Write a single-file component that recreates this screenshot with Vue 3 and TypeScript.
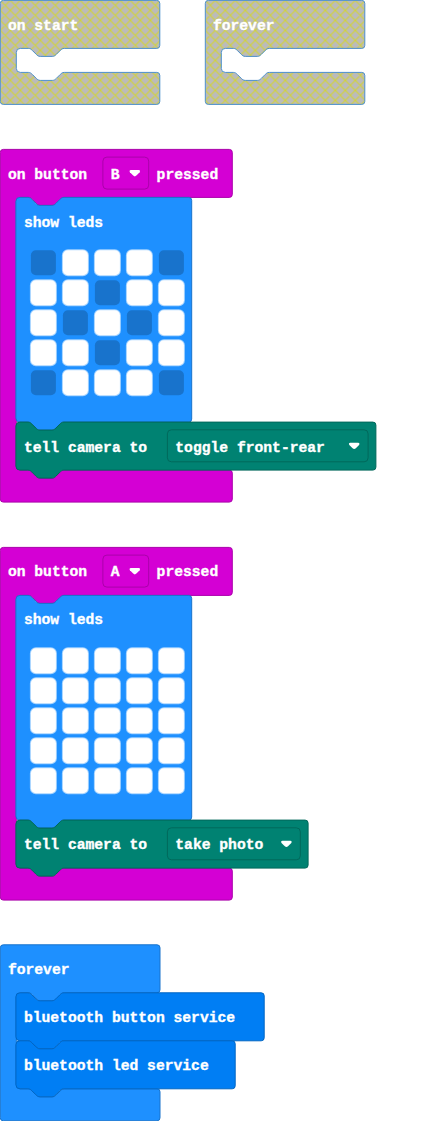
<script setup lang="ts">
type Label = { text: string; x: number; y: number }
type Field = { text: string; x: number; y: number; width: number }
type Block = {
  kind: string
  x: number
  y: number
  path: string
  labels: Label[]
  fields: Field[]
  leds?: string[]
}
type Stack = { id: string; width: number; height: number; dy: number; textDy: number; blocks: Block[] }

const CHAR = 8.8
const NOTCH = 'c2,0 3,1 4,2 l4,4 c1,1 2,2 4,2 h12 c2,0 3,-1 4,-2 l4,-4 c1,-1 2,-2 4,-2'
const NOTCH_BACK = 'c-2,0 -3,1 -4,2 l-4,4 c-1,1 -2,2 -4,2 h-12 c-2,0 -3,-1 -4,-2 l-4,-4 c-1,-1 -2,-2 -4,-2'

// C-shaped container: a 48px header, a cavity for nested statements and a 32px foot.
function hatPath(w: number, cavity: number): string {
  return (
    `M0,3 a3,3 0 0 1 3,-3 H${w - 3} a3,3 0 0 1 3,3 V45 a3,3 0 0 1 -3,3 H64 ${NOTCH_BACK} H20 ` +
    `a4,4 0 0 0 -4,4 v${cavity - 8} a4,4 0 0 0 4,4 h8 ${NOTCH} H${w - 3} a3,3 0 0 1 3,3 v26 a3,3 0 0 1 -3,3 H3 a3,3 0 0 1 -3,-3 z`
  )
}

function statementPath(w: number, h: number): string {
  return (
    `M0,4 a4,4 0 0 1 4,-4 h8 ${NOTCH} H${w - 3} a3,3 0 0 1 3,3 V${h - 3} a3,3 0 0 1 -3,3 ` +
    `H48 ${NOTCH_BACK} H4 a4,4 0 0 1 -4,-4 z`
  )
}

function hat(kind: string, w: number, cavity: number, text: string): Block {
  return { kind, x: 0, y: 0, path: hatPath(w, cavity), labels: [{ text, x: 7.6, y: 29.3 }], fields: [] }
}

function statement(kind: string, y: number, w: number, h: number, text: string): Block {
  return { kind, x: 15.6, y, path: statementPath(w, h), labels: [{ text, x: 8, y: 29.3 }], fields: [] }
}

function buttonStack(
  id: string,
  button: string,
  leds: string[],
  command: string,
  commandWidth: number,
  textDy: number,
): Stack {
  const event = hat('input', 232, 272.7, 'on button')
  event.fields.push({ text: button, x: 102.6, y: 7.7, width: 45.8 })
  event.labels.push({ text: 'pressed', x: 156.3, y: 29.3 })
  const show = statement('basic', 48, 175.8, 224.7, 'show leds')
  show.leds = leds
  const tell = statement('devices', 272.7, commandWidth, 48, 'tell camera to')
  tell.fields.push({ text: command, x: 151.5, y: 7.7, width: commandWidth - 159.3 })
  return { id, width: 380, height: 352.7, dy: 0, textDy, blocks: [event, show, tell] }
}

const unused: Stack[] = [
  { id: 'start', width: 160, height: 104, dy: 0, textDy: 0, blocks: [hat('disabled', 159.5, 24, 'on start')] },
  { id: 'idle', width: 160, height: 104, dy: 0, textDy: 0, blocks: [hat('disabled', 159.5, 24, 'forever')] },
]

const stacks: Stack[] = [
  buttonStack('button-b', 'B', ['.###.', '##.##', '#.#.#', '##.##', '.###.'], 'toggle front-rear', 360, 0.2),
  buttonStack('button-a', 'A', ['#####', '#####', '#####', '#####', '#####'], 'take photo', 292.2, -0.5),
  {
    id: 'loop',
    width: 270,
    height: 176,
    dy: 0.4,
    textDy: -0.4,
    blocks: [
      hat('basic', 159.7, 96, 'forever'),
      statement('bluetooth', 48, 248.3, 48, 'bluetooth button service'),
      statement('bluetooth', 96, 219.3, 48, 'bluetooth led service'),
    ],
  },
]
const rows: Stack[][] = [unused, ...stacks.map((s) => [s])]
</script>

<template>
  <main class="workspace">
    <div v-for="(row, r) in rows" :key="r" class="row">
      <svg v-for="stack in row" :key="stack.id" class="stack" :width="stack.width" :height="stack.height">
        <defs>
          <pattern :id="`hatch-${stack.id}`" patternUnits="userSpaceOnUse" width="10" height="10">
            <rect class="hatch-ground" width="10" height="10" />
            <path class="hatch-lines" d="M-1,-1 L11,11 M11,-1 L-1,11 M-1,9 L1,11 M9,-1 L11,1 M-1,1 L1,-1 M9,11 L11,9" />
          </pattern>
        </defs>
        <g
          v-for="(b, i) in stack.blocks"
          :key="i"
          :class="b.kind"
          :transform="`translate(${b.x + 0.3},${b.y + 0.4 + stack.dy})`"
        >
          <path class="shape" :d="b.path" :fill="b.kind === 'disabled' ? `url(#hatch-${stack.id})` : undefined" />
          <text
            v-for="l in b.labels"
            :key="l.text"
            :x="l.x"
            :y="l.y + stack.textDy"
            :textLength="l.text.length * CHAR"
          >{{ l.text }}</text>
          <g v-for="f in b.fields" :key="f.text" :transform="`translate(${f.x},${f.y})`">
            <rect class="field" :width="f.width" height="32" rx="4" />
            <text x="7.9" :y="21.8 + stack.textDy" :textLength="f.text.length * CHAR">{{ f.text }}</text>
            <path
              class="arrow"
              :transform="`translate(${f.width - 19.3},12.9)`"
              d="M1.5,0 H9.3 Q11.4,.3 10.3,2.2 L7,5.6 Q5.4,7.2 3.8,5.6 L.5,2.2 Q-.6,.3 1.5,0 z"
            />
          </g>
          <template v-for="(line, y) in b.leds ?? []" :key="y">
            <rect
              v-for="(c, x) in line.split('')"
              :key="x"
              :class="c === '#' ? 'led on' : 'led'"
              :x="15 + x * 32"
              :y="52.8 + y * 30"
              width="25"
              height="25"
              rx="5"
            />
          </template>
        </g>
      </svg>
    </div>
  </main>
</template>

<style>
body {
  margin: 0;
  background: #fff;
}
</style>

<style scoped>
.workspace {
  display: flex;
  flex-direction: column;
  gap: 45px;
  width: 428px;
  height: 1121px;
  overflow: hidden;
}
.row {
  display: flex;
  gap: 45px;
}
.stack {
  display: block;
  flex: none;
  overflow: visible;
}
.shape {
  stroke-width: 1;
}
.hatch-ground {
  fill: #bbb;
}
.hatch-lines {
  stroke: #d4d433;
  stroke-width: 1.1;
}
.disabled .shape {
  stroke: #4b8fcc;
}
.input .shape {
  fill: #d400d4;
  stroke: #aa00aa;
}
.basic .shape {
  fill: #1e90ff;
  stroke: #1873cc;
}
.devices .shape {
  fill: #008272;
  stroke: #00685b;
}
.bluetooth .shape {
  fill: #007ef4;
  stroke: #0065c3;
}
.field {
  fill: none;
  stroke: #aa00aa;
}
.devices .field {
  stroke: #00685b;
}
.arrow {
  fill: #fff;
}
.led {
  fill: #1873cc;
}
.led.on {
  fill: #fff;
  stroke: rgba(255, 255, 255, 0.6);
  stroke-width: 2;
}
text {
  fill: #fff;
  stroke: #fff;
  stroke-width: 0.35px;
  font: bold 14.67px 'Liberation Mono', monospace;
  white-space: pre;
}
</style>
